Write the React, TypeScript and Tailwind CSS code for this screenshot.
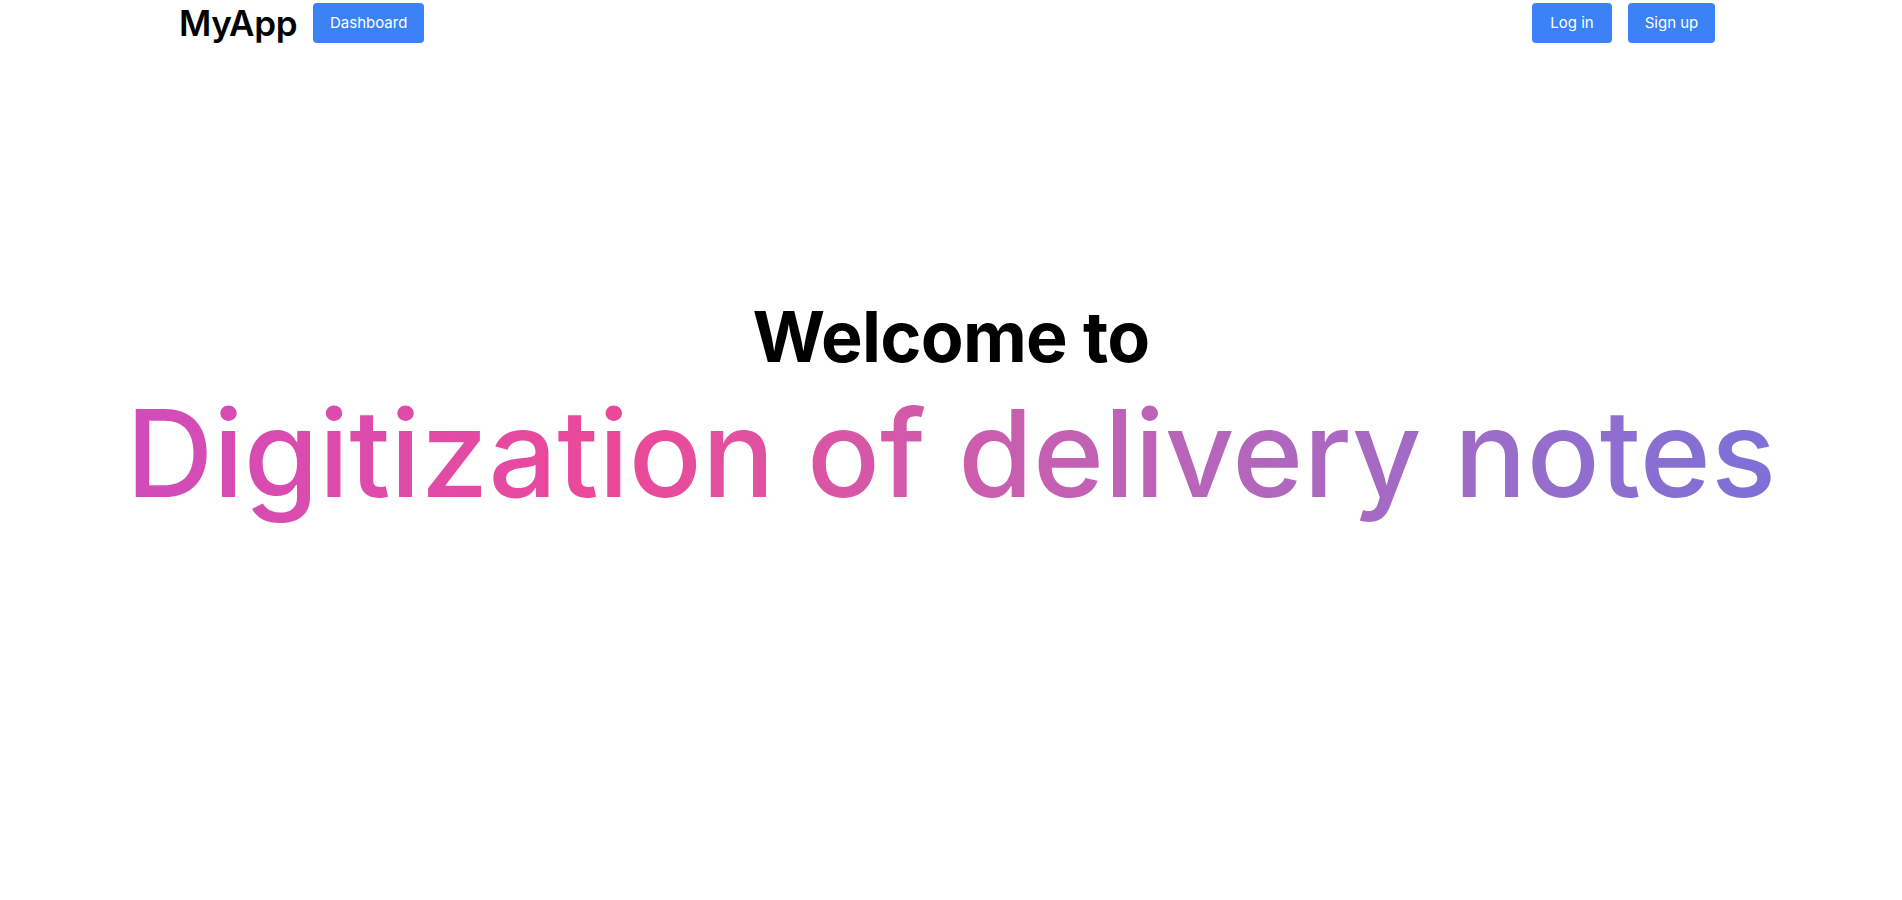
export default function App() {
  return (
    <div className="min-h-screen bg-white font-['Inter',sans-serif] text-black">
      <header className="mx-auto flex max-w-[1544px] items-center justify-between pr-2 pt-[3px]">
        <div className="flex items-center gap-4">
          <a href="#" className="text-[35px] font-semibold leading-10 tracking-[-0.01em]">
            MyApp
          </a>
          <button className="h-10 w-[111px] rounded bg-[#3b82f6] text-[15px] text-white">Dashboard</button>
        </div>
        <div className="flex items-center gap-4">
          <button className="h-10 w-[80px] rounded bg-[#3b82f6] text-[15px] text-white">Log in</button>
          <button className="h-10 w-[87px] rounded bg-[#3b82f6] text-[15px] text-white">Sign up</button>
        </div>
      </header>

      <main className="flex flex-col items-center pt-[255px] text-center">
        <h1 className="text-[70px] font-bold leading-[1.1] tracking-[-0.01em]">Welcome to</h1>
        <h2 className="mt-3 bg-linear-to-r from-[#d04cba] via-[#ec4899] via-30% to-[#7c70d8] bg-clip-text pb-6 text-[121px] font-medium leading-[1.1] text-transparent">
          Digitization of delivery notes
        </h2>
      </main>
    </div>
  );
}
